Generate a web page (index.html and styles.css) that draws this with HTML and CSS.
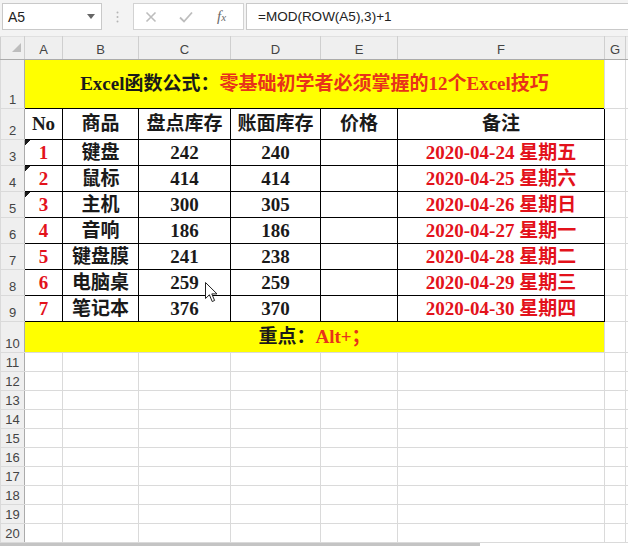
FILE: index.html
```html
<!DOCTYPE html>
<html lang="zh-CN">
<head>
<meta charset="utf-8">
<title>Excel函数公式</title>
<link rel="stylesheet" href="styles.css">
</head>
<body>
<div class="app">
  <div class="formula-bar">
    <div class="name-box">
      <span>A5</span>
      <svg class="caret" width="8" height="5" viewBox="0 0 8 5"><path d="M0 0H8L4 5Z" fill="#666"/></svg>
    </div>
    <div class="grip">
      <svg width="3" height="12" viewBox="0 0 3 12"><circle cx="1.5" cy="1.5" r="1" fill="#b5b5b5"/><circle cx="1.5" cy="6" r="1" fill="#b5b5b5"/><circle cx="1.5" cy="10.5" r="1" fill="#b5b5b5"/></svg>
    </div>
    <div class="fx-box">
      <svg class="btn" width="12" height="12" viewBox="0 0 12 12"><path d="M1.5 1.5L10.5 10.5M10.5 1.5L1.5 10.5" stroke="#bdbdbd" stroke-width="1.6" fill="none"/></svg>
      <svg class="btn" width="14" height="12" viewBox="0 0 14 12"><path d="M1 6.5L5 10.5L13 1.5" stroke="#bdbdbd" stroke-width="1.8" fill="none"/></svg>
      <span class="fx">f<span class="fx-x">x</span></span>
    </div>
    <div class="formula-input">=MOD(ROW(A5),3)+1</div>
  </div>

  <div class="grid-wrap">
    <table class="sheet">
      <colgroup>
        <col class="c-rh"><col class="c-a"><col class="c-b"><col class="c-c"><col class="c-d"><col class="c-e"><col class="c-f"><col class="c-g"><col class="c-h">
      </colgroup>
      <tr class="r-cols">
        <th class="corner"><span class="corner-tri"></span></th>
        <th>A</th><th>B</th><th>C</th><th>D</th><th>E</th><th>F</th><th>G</th><th></th>
      </tr>
      <tr class="r-title">
        <th class="rh">1</th>
        <td class="yellow title" colspan="6">Excel函数公式：<span class="orange">零基础初学者必须掌握的12个Excel技巧</span></td>
        <td></td><td></td>
      </tr>
      <tr class="r-head">
        <th class="rh">2</th>
        <td class="box">No</td><td class="box">商品</td><td class="box">盘点库存</td><td class="box">账面库存</td><td class="box">价格</td><td class="box">备注</td>
        <td></td><td></td>
      </tr>
      <tr class="r-data">
        <th class="rh">3</th>
        <td class="box red flag">1</td><td class="box">键盘</td><td class="box">242</td><td class="box">240</td><td class="box"></td><td class="box red date">2020-04-24 星期五</td>
        <td></td><td></td>
      </tr>
      <tr class="r-data">
        <th class="rh">4</th>
        <td class="box red flag">2</td><td class="box">鼠标</td><td class="box">414</td><td class="box">414</td><td class="box"></td><td class="box red date">2020-04-25 星期六</td>
        <td></td><td></td>
      </tr>
      <tr class="r-data">
        <th class="rh">5</th>
        <td class="box red flag">3</td><td class="box">主机</td><td class="box">300</td><td class="box">305</td><td class="box"></td><td class="box red date">2020-04-26 星期日</td>
        <td></td><td></td>
      </tr>
      <tr class="r-data">
        <th class="rh">6</th>
        <td class="box red">4</td><td class="box">音响</td><td class="box">186</td><td class="box">186</td><td class="box"></td><td class="box red date">2020-04-27 星期一</td>
        <td></td><td></td>
      </tr>
      <tr class="r-data">
        <th class="rh">7</th>
        <td class="box red">5</td><td class="box">键盘膜</td><td class="box">241</td><td class="box">238</td><td class="box"></td><td class="box red date">2020-04-28 星期二</td>
        <td></td><td></td>
      </tr>
      <tr class="r-data">
        <th class="rh">8</th>
        <td class="box red">6</td><td class="box">电脑桌</td><td class="box">259</td><td class="box">259</td><td class="box"></td><td class="box red date">2020-04-29 星期三</td>
        <td></td><td></td>
      </tr>
      <tr class="r-data">
        <th class="rh">9</th>
        <td class="box red">7</td><td class="box">笔记本</td><td class="box">376</td><td class="box">370</td><td class="box"></td><td class="box red date">2020-04-30 星期四</td>
        <td></td><td></td>
      </tr>
      <tr class="r-note">
        <th class="rh">10</th>
        <td class="yellow note" colspan="6">重点：<span class="orange">Alt+；</span></td>
        <td></td><td></td>
      </tr>
      <tr class="r-empty"><th class="rh">11</th><td></td><td></td><td></td><td></td><td></td><td></td><td></td><td></td></tr>
      <tr class="r-empty"><th class="rh">12</th><td></td><td></td><td></td><td></td><td></td><td></td><td></td><td></td></tr>
      <tr class="r-empty"><th class="rh">13</th><td></td><td></td><td></td><td></td><td></td><td></td><td></td><td></td></tr>
      <tr class="r-empty"><th class="rh">14</th><td></td><td></td><td></td><td></td><td></td><td></td><td></td><td></td></tr>
      <tr class="r-empty"><th class="rh">15</th><td></td><td></td><td></td><td></td><td></td><td></td><td></td><td></td></tr>
      <tr class="r-empty"><th class="rh">16</th><td></td><td></td><td></td><td></td><td></td><td></td><td></td><td></td></tr>
      <tr class="r-empty"><th class="rh">17</th><td></td><td></td><td></td><td></td><td></td><td></td><td></td><td></td></tr>
      <tr class="r-empty"><th class="rh">18</th><td></td><td></td><td></td><td></td><td></td><td></td><td></td><td></td></tr>
      <tr class="r-empty"><th class="rh">19</th><td></td><td></td><td></td><td></td><td></td><td></td><td></td><td></td></tr>
      <tr class="r-empty"><th class="rh">20</th><td></td><td></td><td></td><td></td><td></td><td></td><td></td><td></td></tr>
    </table>
    <!-- mouse pointer resting over the sheet -->
    <svg class="pointer" width="13" height="21" viewBox="0 0 13 21"><path d="M0.5 0.5V16.5L4.4 12.8L7.2 19.5L9.6 18.5L6.8 11.9H12Z" fill="#fff" stroke="#222" stroke-width="1" stroke-linejoin="round"/></svg>
  </div>
  <div class="hscroll"></div>
</div>
</body>
</html>
```

FILE: styles.css
```css
* {
  box-sizing: border-box;
}

html,
body {
  margin: 0;
  padding: 0;
}

body {
  width: 628px;
  height: 546px;
  overflow: hidden;
  background: #fff;
  font-family: "Liberation Sans", Arial, "Noto Sans CJK SC", sans-serif;
}

.app {
  width: 628px;
  height: 546px;
  overflow: hidden;
  display: flex;
  flex-direction: column;
}

/* ---- formula bar ---- */
.formula-bar {
  height: 36px;
  flex: none;
  display: flex;
  align-items: flex-start;
  padding-top: 3px;
  background: #f3f3f3;
}

.name-box {
  margin-left: 2px;
  width: 100px;
  height: 27px;
  background: #fff;
  border: 1px solid #c9c9c9;
  display: flex;
  align-items: center;
  justify-content: space-between;
  padding: 0 6px 0 5px;
  font-size: 14px;
  color: #222;
}

.grip {
  width: 31px;
  height: 27px;
  display: flex;
  align-items: center;
  justify-content: center;
}

.fx-box {
  width: 111px;
  height: 27px;
  background: #fff;
  border: 1px solid #d2d2d2;
  display: flex;
  align-items: center;
  padding-left: 11px;
}

.fx-box .btn {
  margin-right: 22px;
}

.fx-box .btn + .btn {
  margin-right: 24px;
}

.fx {
  font-family: "Liberation Serif", serif;
  font-style: italic;
  font-size: 15px;
  color: #6a6a6a;
}

.fx-x {
  font-size: 11px;
}

.formula-input {
  flex: 1;
  margin-left: 2px;
  height: 27px;
  background: #fff;
  border: 1px solid #c9c9c9;
  border-right: none;
  padding-left: 11px;
  font-size: 13.5px;
  line-height: 25px;
  color: #222;
}

/* ---- sheet grid ---- */
.grid-wrap {
  position: relative;
  flex: none;
}

.sheet {
  border-collapse: collapse;
  table-layout: fixed;
  width: 628px;
}

.c-rh { width: 24px; }
.c-a { width: 38px; }
.c-b { width: 76px; }
.c-c { width: 92px; }
.c-d { width: 90px; }
.c-e { width: 77px; }
.c-f { width: 207px; }
.c-g { width: 21px; }
.c-h { width: 3px; }

.sheet th,
.sheet td {
  padding: 0;
  border: 1px solid #dadada;
  overflow: hidden;
  white-space: nowrap;
}

.sheet td {
  font-family: "Liberation Serif", "Noto Sans CJK SC", serif;
  font-weight: bold;
  font-size: 19px;
  line-height: 20px;
  text-align: center;
  vertical-align: middle;
  color: #1a1a1a;
}

.sheet th {
  background: #efefef;
  font-weight: normal;
  font-size: 13px;
  color: #444;
}

.r-cols th {
  height: 23px;
  padding-top: 2px;
  border-top-color: #e0e0e0;
  border-bottom-color: #ababab;
  border-left-color: #cfcfcf;
  border-right-color: #cfcfcf;
  vertical-align: middle;
}

.corner {
  text-align: right;
  vertical-align: bottom !important;
}

.corner-tri {
  display: inline-block;
  margin: 0 3px 4px 0;
  width: 0;
  height: 0;
  border-left: 9px solid transparent;
  border-bottom: 9px solid #bdbdbd;
}

.rh {
  text-align: center;
  vertical-align: bottom;
  border-right-color: #ababab !important;
  border-top-color: #d0d0d0;
  border-bottom-color: #d0d0d0;
  line-height: 15px;
  padding-bottom: 1px !important;
}

.r-title th { height: 49px; }
.r-head th { height: 31px; }
.r-data th { height: 26px; }
.r-note th { height: 31px; }
.r-empty th { height: 19px; }

.yellow {
  background: #ffff00;
  border: none !important;
}

.box {
  border: 1px solid #000 !important;
}

.red {
  color: #e3121b !important;
}

.orange {
  color: #e8321a;
}

.title {
  font-size: 19px;
}

.date {
  font-size: 19.5px;
}

/* green-corner error marker on a cell */
.flag {
  background: linear-gradient(135deg, #1c1c1c 0 4px, transparent 4px) no-repeat;
}

.pointer {
  position: absolute;
  left: 205px;
  top: 246px;
}

.hscroll {
  flex: none;
  width: 480px;
  height: 3px;
  background: #c4c4c4;
}
```
